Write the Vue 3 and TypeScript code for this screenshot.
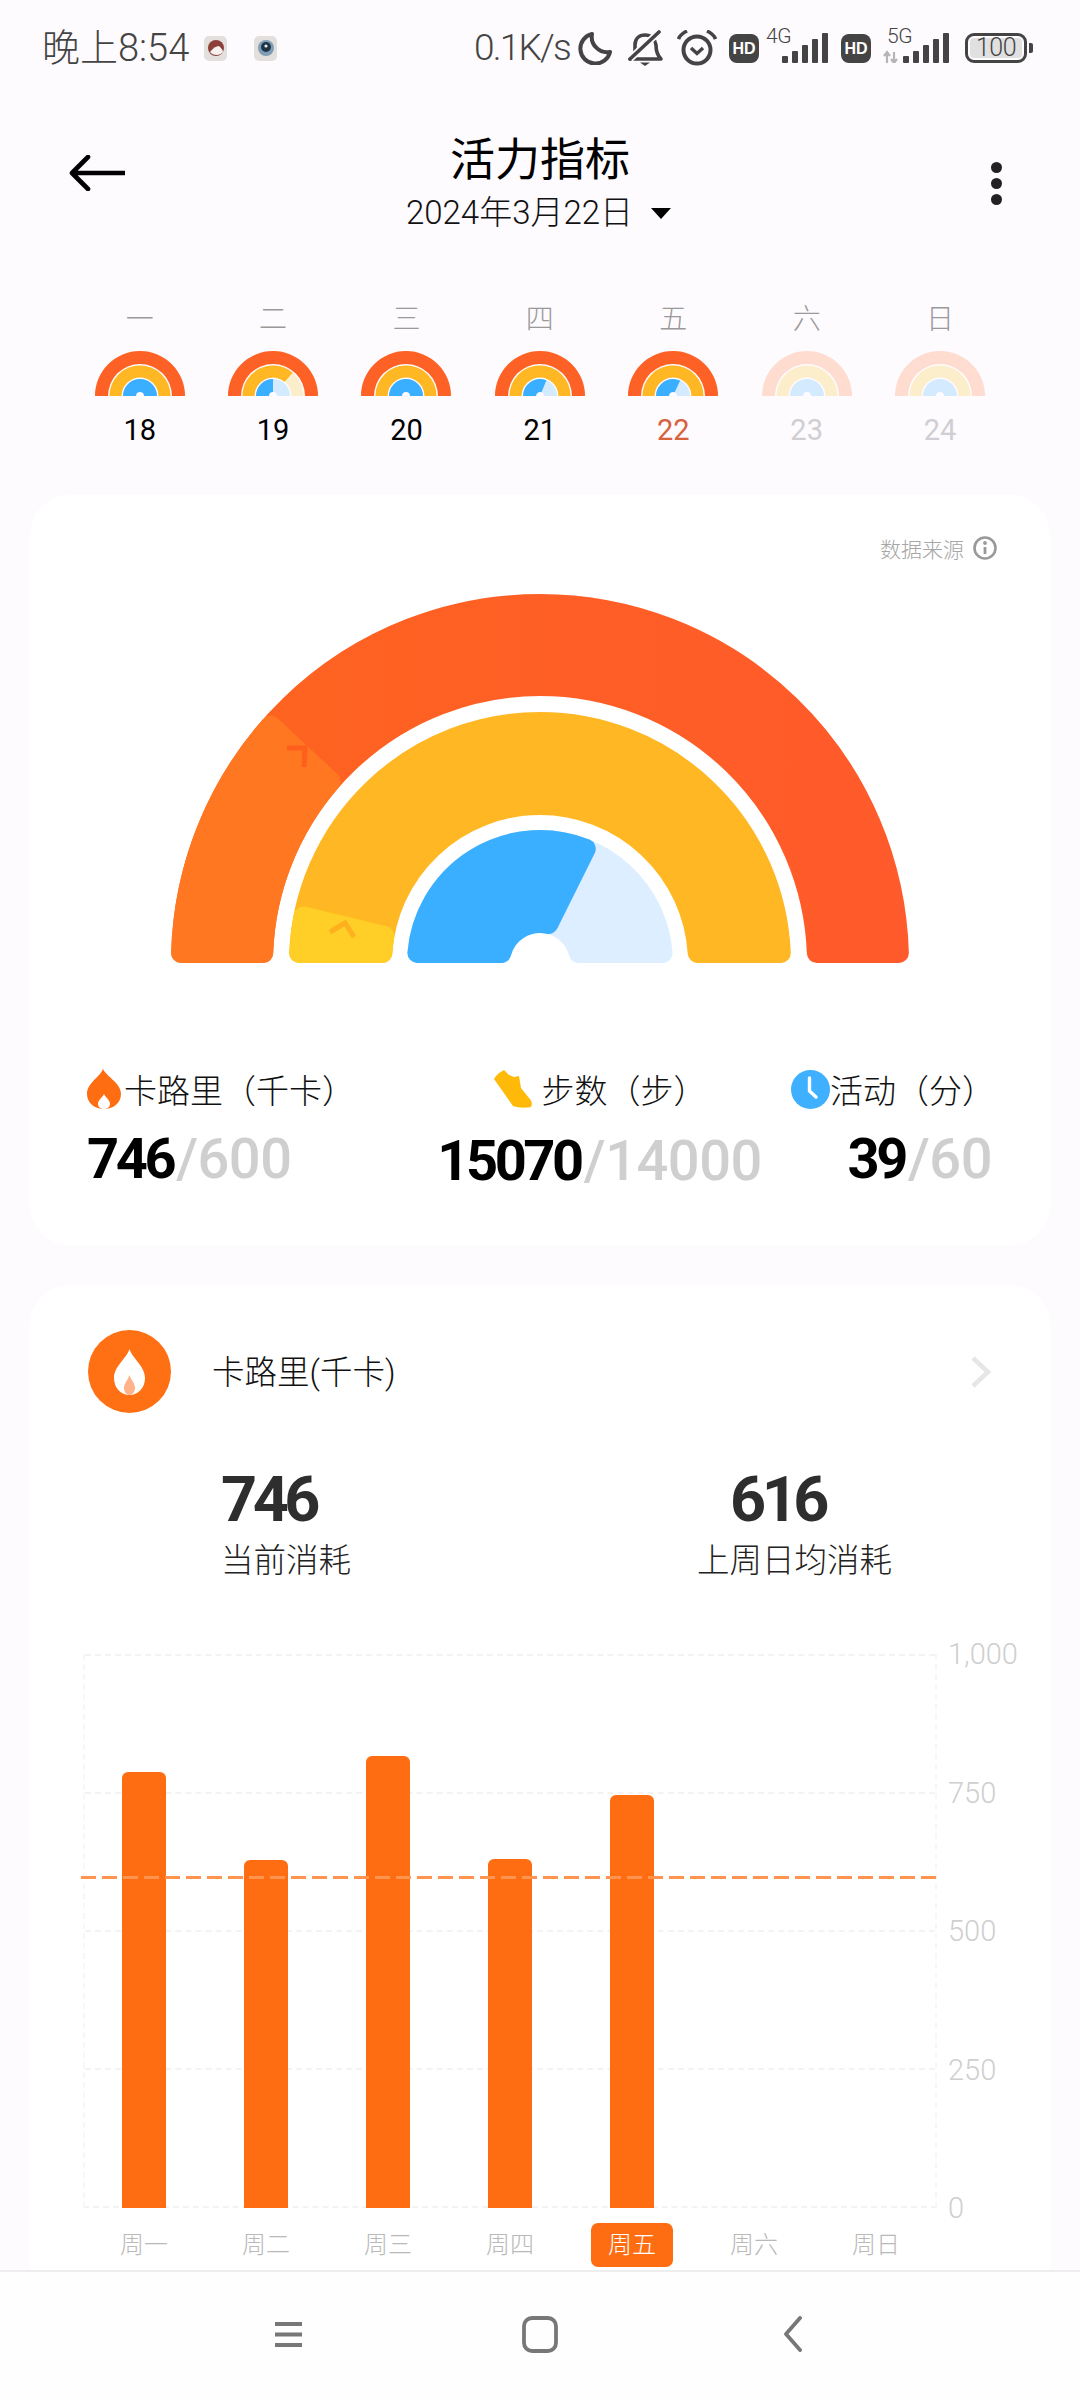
<script setup lang="ts">
// angles run from the left end (0) over the top to the right end (180)
const polar = (cx: number, cy: number, r: number, deg: number) => {
  const a = (deg * Math.PI) / 180
  return `${(cx - r * Math.cos(a)).toFixed(2)} ${(cy - r * Math.sin(a)).toFixed(2)}`
}

const sector = (cx: number, cy: number, inner: number, outer: number, from: number, to: number, inset = 0) => {
  const ro = outer - inset
  const ri = inner + inset
  const pad = (r: number) => (inset ? (inset / r) * (180 / Math.PI) : 0)
  return [
    `M ${polar(cx, cy, ro, from + pad(ro))}`,
    `A ${ro} ${ro} 0 ${to - from > 180 ? 1 : 0} 1 ${polar(cx, cy, ro, to - pad(ro))}`,
    `L ${polar(cx, cy, ri, to - pad(ri))}`,
    `A ${ri} ${ri} 0 ${to - from > 180 ? 1 : 0} 0 ${polar(cx, cy, ri, from + pad(ri))}`,
    'Z',
  ].join(' ')
}

const bigRings = [
  { d: sector(369, 369, 267, 369, 0, 180, 10), fill: 'url(#redFade)' },
  { d: sector(369, 369, 267, 369, 0, 43, 10), fill: '#ff7821' },
  { d: sector(369, 369, 148, 251, 0, 180, 10), fill: '#ffb823' },
  { d: sector(369, 369, 148, 251, 0, 13.5, 10), fill: '#ffcf27' },
  { d: sector(369, 369, 30, 133, 0, 180, 10), fill: '#dceeff' },
  { d: sector(369, 369, 30, 133, 0, 116.5, 10), fill: '#3aaeff' },
]

interface Day {
  week: string
  date: number
  red: number
  yellow: number
  blue: number
  state?: 'today' | 'future'
}

const days: Day[] = [
  { week: '一', date: 18, red: 180, yellow: 180, blue: 180 },
  { week: '二', date: 19, red: 180, yellow: 130, blue: 90 },
  { week: '三', date: 20, red: 180, yellow: 180, blue: 180 },
  { week: '四', date: 21, red: 180, yellow: 180, blue: 112 },
  { week: '五', date: 22, red: 180, yellow: 180, blue: 115, state: 'today' },
  { week: '六', date: 23, red: 0, yellow: 0, blue: 0, state: 'future' },
  { week: '日', date: 24, red: 0, yellow: 0, blue: 0, state: 'future' },
]

const miniRings = (d: Day) => [
  { d: sector(45, 45, 32, 45, 0, 180), fill: '#fedccf' },
  { d: sector(45, 45, 32, 45, 0, Math.max(d.red, 0.01)), fill: d.red ? '#fe6125' : 'none' },
  { d: sector(45, 45, 18.5, 30.5, 0, 180), fill: '#fdeecb' },
  { d: sector(45, 45, 18.5, 30.5, 0, Math.max(d.yellow, 0.01)), fill: d.yellow ? '#ffb823' : 'none' },
  { d: sector(45, 45, 4, 17, 0, 180), fill: '#d3eaff' },
  { d: sector(45, 45, 4, 17, 0, Math.max(d.blue, 0.01)), fill: d.blue ? '#3aaeff' : 'none' },
]

const weekBars = [
  { label: '周一', value: 787 },
  { label: '周二', value: 628 },
  { label: '周三', value: 816 },
  { label: '周四', value: 630 },
  { label: '周五', value: 746, active: true },
  { label: '周六', value: 0 },
  { label: '周日', value: 0 },
]

const axis = ['1,000', '750', '500', '250', '0']
const signal = [7, 12, 18, 24, 30]
</script>

<template>
  <div class="screen">
    <div class="main">
      <div class="status">
        <span class="clock">晚上8:54</span>
        <span class="note note-a">
          <svg width="18" height="18" viewBox="0 0 18 18">
            <circle cx="9" cy="9" r="8" fill="#8c3f38" />
            <path d="M3 13 C6 9 9 7 12 7 C14 9 16 11 16 13 C13 17 6 17 3 13 Z" fill="#f4f1ee" />
          </svg>
        </span>
        <span class="note note-b">
          <svg width="18" height="18" viewBox="0 0 18 18">
            <circle cx="9" cy="9" r="8" fill="#7f9db4" />
            <circle cx="9" cy="8" r="5" fill="#1f3445" />
            <circle cx="9" cy="7" r="1.6" fill="#e6eef4" />
          </svg>
        </span>
        <span class="speed">0.1K/s</span>
        <svg class="ic moon" width="36" height="34" viewBox="0 0 36 34">
          <path d="M15 3 A15 15 0 1 0 33 21 A15.5 15.5 0 0 1 15 3 Z" fill="none" stroke="#444" stroke-width="4" stroke-linejoin="round" />
        </svg>
        <svg class="ic bell" width="35" height="36" viewBox="0 0 35 36">
          <path d="M2 29 H33 C29 25 28 21 28 15 C27 9 23 5 17 5 C11 5 7 9 7 15 V22" fill="none" stroke="#444" stroke-width="3.6" stroke-linejoin="round" stroke-linecap="round" />
          <path d="M12 32.5 H22 L17 36 Z" fill="#444" />
          <path d="M31 2 L2 29" stroke="#fefbfe" stroke-width="7" />
          <path d="M31 2 L2 29" stroke="#444" stroke-width="3.6" stroke-linecap="round" />
        </svg>
        <svg class="ic alarm" width="40" height="36" viewBox="0 0 40 36">
          <circle cx="20" cy="20" r="13.5" fill="none" stroke="#444" stroke-width="4" />
          <path d="M14 18 L20 23.5 L26 18" fill="none" stroke="#444" stroke-width="3.4" />
          <path d="M1.5 9 C3 5 6 3 10 1 M38.5 9 C37 5 34 3 30 1" fill="none" stroke="#444" stroke-width="3.6" />
        </svg>
        <span class="hd">HD</span>
        <span class="net">
          <span class="net-tag">4G</span>
          <svg width="46" height="30" viewBox="0 0 46 30" class="net-bars">
            <rect v-for="(h, i) in signal" :key="i" :x="i * 10" :y="30 - h" width="6" :height="h" rx="1" fill="#444" />
          </svg>
        </span>
        <span class="hd hd-second">HD</span>
        <span class="net net-five">
          <span class="net-tag">5G</span>
          <svg width="66" height="30" viewBox="0 0 66 30" class="net-bars">
            <path d="M4 20 V30 M1 23 L4 19 L7 23 M11 19 V29 M8 26 L11 30 L14 26" fill="none" stroke="#b5b5b5" stroke-width="2.2" />
            <rect v-for="(h, i) in signal" :key="i" :x="20 + i * 10" :y="30 - h" width="6" :height="h" rx="1" fill="#444" />
          </svg>
        </span>
        <span class="battery"><span class="battery-fill">100</span></span>
        <i class="battery-cap"></i>
      </div>

      <div class="header">
        <svg class="back" width="56" height="36" viewBox="0 0 56 36">
          <path d="M55 18 H4 M19 2 L3 18 L19 34" fill="none" stroke="#000" stroke-width="4.6" stroke-linecap="round" stroke-linejoin="round" />
        </svg>
        <div class="heading">
          <div class="title">活力指标</div>
          <div class="date">2024年3月22日<i class="caret"></i></div>
        </div>
        <div class="more"><i></i><i></i><i></i></div>
      </div>

      <div class="week">
        <div v-for="d in days" :key="d.date" class="day" :class="d.state">
          <span class="day-name">{{ d.week }}</span>
          <svg width="90" height="45" viewBox="0 0 90 45" class="mini">
            <path v-for="(r, i) in miniRings(d)" :key="i" :d="r.d" :fill="r.fill" />
          </svg>
          <span class="day-num">{{ d.date }}</span>
        </div>
      </div>

      <section class="card rings-card">
        <div class="source">
          <span>数据来源</span>
          <svg width="26" height="26" viewBox="0 0 26 26">
            <circle cx="13" cy="13" r="10.5" fill="none" stroke="#999" stroke-width="2.6" />
            <circle cx="13" cy="8" r="1.9" fill="#999" />
            <path d="M13 12 V19" stroke="#999" stroke-width="2.8" />
          </svg>
        </div>

        <svg class="rainbow" width="738" height="369" viewBox="0 0 738 369">
          <defs>
            <linearGradient id="redFade" x1="0" x2="1" y1="0" y2="0">
              <stop offset="0" stop-color="#fe641f" />
              <stop offset="1" stop-color="#ff5a2b" />
            </linearGradient>
          </defs>
          <path v-for="(r, i) in bigRings" :key="i" :d="r.d" :fill="r.fill" :stroke="r.fill" stroke-width="20" stroke-linejoin="round" />
          <path d="M116 154 H134 L133 173" fill="none" stroke="#ff5e1d" stroke-width="5" />
          <path d="M159 338 L174 329 L183 343" fill="none" stroke="#ffb01f" stroke-width="5" />
        </svg>

        <div class="stats">
          <div class="stat stat-left">
            <div class="stat-label">
              <svg width="34" height="40" viewBox="0 0 34 40">
                <path d="M16 0 C20 8 34 14 34 25 C34 34 26 40 17 40 C8 40 0 34 0 25 C0 14 12 9 16 0 Z" fill="#ff6d13" />
                <path d="M17 25 C19 29 23 31 23 35 C23 38 20 40 17 40 C14 40 11 38 11 35 C11 31 15 29 17 25 Z" fill="#fff" />
              </svg>
              <span>卡路里（千卡）</span>
            </div>
            <div class="stat-value"><b>746</b><span>/600</span></div>
          </div>
          <div class="stat stat-mid">
            <div class="stat-label">
              <svg width="40" height="40" viewBox="0 0 40 40">
                <path d="M11 1 C7 3 3 6 1 10 L20 37 C25 39 33 39 38 38 C40 34 38 31 36 29 L28 19 L26 7 L21 8 L16 6 Z" fill="#ffb908" />
              </svg>
              <span>步数（步）</span>
            </div>
            <div class="stat-value"><b>15070</b><span>/14000</span></div>
          </div>
          <div class="stat stat-right">
            <div class="stat-label">
              <svg width="39" height="39" viewBox="0 0 39 39">
                <circle cx="19.5" cy="19.5" r="19.5" fill="#3fb0ff" />
                <path d="M18.5 8 V21 L25 27" fill="none" stroke="#fff" stroke-width="3.4" stroke-linecap="round" stroke-linejoin="round" />
              </svg>
              <span>活动（分）</span>
            </div>
            <div class="stat-value"><b>39</b><span>/60</span></div>
          </div>
        </div>
      </section>

      <section class="card chart-card">
        <div class="chart-head">
          <svg width="83" height="83" viewBox="0 0 83 83">
            <circle cx="41.5" cy="41.5" r="41.5" fill="#ff7014" />
            <path d="M41.5 19 C44 28 57 36 57 48 C57 58 50 65 41.5 65 C33 65 26 58 26 48 C26 36 39 28 41.5 19 Z" fill="#fff" />
            <path d="M41.5 45 C43 50 47 53 47 58 C47 62 44.5 65 41.5 65 C38.5 65 36 62 36 58 C36 53 40 50 41.5 45 Z" fill="#ffb38a" />
          </svg>
          <span class="chart-title">卡路里(千卡)</span>
          <svg class="chevron" width="22" height="32" viewBox="0 0 22 32">
            <path d="M3 2 L18 16 L3 30" fill="none" stroke="#e6e6e6" stroke-width="4.5" />
          </svg>
        </div>

        <div class="summary">
          <div class="sum-item">
            <b>746</b>
            <span>当前消耗</span>
          </div>
          <div class="sum-item sum-last">
            <b>616</b>
            <span>上周日均消耗</span>
          </div>
        </div>

        <div class="chart">
          <div class="plot">
            <div class="grid-lines"><i></i><i></i><i></i><i></i></div>
            <div class="bars">
              <div v-for="b in weekBars" :key="b.label" class="bar-slot">
                <div v-if="b.value" class="bar" :style="{ height: b.value / 10 + '%' }"></div>
              </div>
            </div>
            <div class="target"></div>
          </div>
          <div class="axis">
            <span v-for="a in axis" :key="a">{{ a }}</span>
          </div>
        </div>
        <div class="labels">
          <span v-for="b in weekBars" :key="b.label" class="label" :class="{ active: b.active }">{{ b.label }}</span>
        </div>
      </section>
    </div>

    <nav class="nav">
      <svg width="27" height="25" viewBox="0 0 27 25">
        <path d="M0 2 H27 M0 12.5 H27 M0 23 H27" stroke="#777" stroke-width="3.8" />
      </svg>
      <svg class="nav-home" width="36" height="37" viewBox="0 0 36 37">
        <rect x="2" y="2" width="32" height="33" rx="8" fill="none" stroke="#777" stroke-width="3.8" />
      </svg>
      <svg class="nav-back" width="19" height="36" viewBox="0 0 19 36">
        <path d="M17 2 L3 18 L17 34" fill="none" stroke="#777" stroke-width="3.8" stroke-linecap="round" stroke-linejoin="round" />
      </svg>
    </nav>
  </div>
</template>

<style scoped>
.screen {
  width: 1080px;
  height: 2400px;
  display: flex;
  flex-direction: column;
  overflow: hidden;
  background: #fefbfe;
  font-family: Roboto, "Noto Sans CJK SC", sans-serif;
  font-weight: 300;
  color: #111;
}

.main {
  flex: 1;
  min-height: 0;
  overflow: hidden;
}

.status {
  height: 96px;
  padding-left: 42px;
  display: flex;
  align-items: center;
  color: #444;
  box-sizing: border-box;
}

.clock,
.speed {
  line-height: 40px;
  white-space: nowrap;
}

.clock {
  width: 162px;
  font-size: 38px;
}

.note {
  flex: none;
  width: 23px;
  height: 25px;
  border-radius: 5px;
  background: #e3dfdc;
  display: flex;
  align-items: center;
  justify-content: center;
}

.note-b {
  margin-left: 27px;
}

.speed {
  margin-left: 197px;
  width: 103px;
  font-size: 37px;
  letter-spacing: -1.8px;
}

.ic {
  flex: none;
}

.bell {
  margin-left: 15px;
}

.alarm {
  margin-left: 14px;
}

.hd {
  flex: none;
  width: 30px;
  height: 29px;
  margin-left: 12px;
  border-radius: 8px;
  background: #444;
  color: #fff;
  font-size: 16px;
  font-weight: 700;
  line-height: 29px;
  text-align: center;
  font-family: "Liberation Sans", sans-serif;
}

.hd-second {
  margin-left: 13px;
}

.net {
  flex: none;
  width: 62px;
  height: 34px;
  position: relative;
  margin: -4px 0 0 7px;
}

.net-five {
  width: 66px;
  margin-left: 12px;
}

.net-tag {
  position: absolute;
  left: 0;
  top: -2px;
  font-size: 21px;
  line-height: 18px;
  letter-spacing: -0.5px;
}

.net-five .net-tag {
  left: 4px;
}

.net-bars {
  position: absolute;
  right: 0;
  bottom: 0;
}

.battery {
  flex: none;
  width: 62px;
  height: 30px;
  margin-left: 16px;
  box-sizing: border-box;
  border: 3.5px solid #444;
  border-radius: 9px;
  padding: 2px;
  display: flex;
}

.battery-fill {
  flex: 1;
  background: #e0e0e0;
  border-radius: 4px;
  font-size: 25px;
  line-height: 19px;
  letter-spacing: -0.5px;
  text-align: center;
  color: #444;
}

.battery-cap {
  flex: none;
  width: 4px;
  height: 10px;
  margin-left: 2px;
  border-radius: 0 2px 2px 0;
  background: #444;
}

.header {
  display: grid;
  grid-template-columns: 1fr auto 1fr;
  padding: 38px 69px 0;
}

.back {
  margin-top: 21px;
}

.heading {
  text-align: center;
}

.title {
  font-size: 45px;
  line-height: 52px;
  font-weight: 400;
  color: #000;
  margin-top: 1px;
}

.date {
  margin: 6px 0 0 -3px;
  font-size: 33px;
  line-height: 40px;
  display: flex;
  align-items: center;
  justify-content: center;
  color: #111;
}

.caret {
  width: 0;
  height: 0;
  margin-left: 18px;
  border-left: 10px solid transparent;
  border-right: 10px solid transparent;
  border-top: 11px solid #000;
}

.more {
  justify-self: end;
  display: flex;
  flex-direction: column;
  gap: 5px;
  padding-top: 28px;
  margin-right: 9px;
}

.more i {
  width: 11px;
  height: 11px;
  border-radius: 50%;
  background: #222;
}

.week {
  display: grid;
  grid-template-columns: repeat(7, 133.4px);
  padding-left: 73px;
  margin-top: 67px;
}

.day {
  display: flex;
  flex-direction: column;
  align-items: center;
}

.day-name {
  font-size: 28px;
  line-height: 40px;
  color: #999;
}

.mini {
  display: block;
  margin-top: 11px;
}

.day-num {
  margin-top: 14px;
  font-size: 29px;
  line-height: 40px;
  font-weight: 400;
  color: #000;
}

.today .day-num {
  color: #d8623c;
}

.future .day-num {
  color: #cfcfd3;
}

.card {
  margin: 0 30px;
  background: #fff;
  border-radius: 40px;
}

.rings-card {
  margin-top: 45px;
  height: 750px;
  padding-top: 40px;
  box-sizing: border-box;
}

.source {
  display: flex;
  justify-content: flex-end;
  align-items: center;
  gap: 8px;
  padding-right: 52px;
  height: 26px;
  font-size: 21px;
  color: #a6a6a6;
}

.rainbow {
  display: block;
  margin: 33px auto 0;
}

.stats {
  display: flex;
  justify-content: space-between;
  margin-top: 106px;
  padding: 0 58px 0 57px;
}

.stat {
  display: flex;
  flex-direction: column;
}

.stat-mid {
  align-items: center;
  margin-left: 53px;
}

.stat-right {
  align-items: flex-end;
}

.stat-label {
  display: flex;
  align-items: center;
  height: 40px;
  font-size: 33px;
  color: #111;
  white-space: nowrap;
}

.stat-left .stat-label span {
  margin-left: 3px;
}

.stat-mid .stat-label span {
  margin-left: 9px;
}

.stat-right .stat-label {
  margin-right: -3px;
}

.stat-value {
  margin-top: 20px;
  font-size: 56px;
  line-height: 60px;
  font-family: Roboto, sans-serif;
  white-space: nowrap;
}

.stat-mid .stat-value {
  margin-top: 22px;
}

.stat-value b {
  font-weight: 700;
  letter-spacing: -3.4px;
  color: #000;
}

.stat-value span {
  margin-left: 3px;
  font-weight: 500;
  letter-spacing: -0.5px;
  color: #cfcfcf;
}

.chart-card {
  margin-top: 40px;
  border-radius: 40px 40px 0 0;
  padding-top: 45px;
  height: 1000px;
}

.chart-head {
  display: flex;
  align-items: center;
  padding: 0 58px;
}

.chart-title {
  margin: 0 0 5px 41px;
  font-size: 32.5px;
  flex: 1;
}

.summary {
  display: grid;
  grid-template-columns: 476px auto;
  padding-left: 191px;
  margin-top: 52px;
}

.sum-item {
  display: flex;
  flex-direction: column;
  align-items: flex-start;
}

.sum-item b {
  font-size: 63px;
  line-height: 70px;
  font-weight: 700;
  letter-spacing: -4.5px;
  color: #2e2e2e;
  font-family: Roboto, sans-serif;
}

.sum-item span {
  margin-top: 4px;
  font-size: 32.5px;
  line-height: 44px;
  color: #222;
}

.sum-last b {
  margin-left: 33px;
}

.chart {
  display: flex;
  margin: 71px 0 0 53px;
}

.plot {
  width: 854px;
  height: 554px;
  position: relative;
  display: grid;
}

.plot > .grid-lines,
.plot > .bars {
  grid-area: 1 / 1;
}

.grid-lines {
  display: flex;
  flex-direction: column;
  border-bottom: 2px dashed #f3f3f3;
  border-left: 2px dashed #f7f7f7;
  border-right: 2px dashed #f7f7f7;
}

.grid-lines i {
  flex: 1;
  border-top: 2px dashed #f3f3f3;
}

.bars {
  display: grid;
  grid-template-columns: repeat(7, 122px);
  align-items: end;
  height: 554px;
}

.bar-slot {
  height: 100%;
  display: flex;
  align-items: flex-end;
  justify-content: center;
}

.bar {
  width: 44px;
  background: #ff6d13;
  border-radius: 6px 6px 0 0;
}

.target {
  position: absolute;
  left: -2px;
  right: -2px;
  top: 40%;
  height: 3px;
  background: repeating-linear-gradient(90deg, #ff9350 0 15px, transparent 15px 21px);
}

.axis {
  margin-left: 11px;
  height: 554px;
  display: flex;
  flex-direction: column;
  justify-content: space-between;
}

.axis span {
  height: 0;
  line-height: 0;
  font-size: 29px;
  color: #cfcfcf;
}

.labels {
  display: grid;
  grid-template-columns: repeat(7, 122px);
  margin: 15px 0 0 53px;
  justify-items: center;
}

.label {
  width: 82px;
  height: 44px;
  line-height: 44px;
  border-radius: 7px;
  text-align: center;
  font-size: 24px;
  color: #b9b9b9;
}

.label.active {
  background: #ff6d13;
  color: #fff;
}

.nav {
  height: 130px;
  flex: none;
  box-sizing: border-box;
  border-top: 2px solid #eee;
  background: #fefefe;
  display: flex;
  align-items: center;
  padding: 0 0 4px 275px;
}

.nav-home {
  margin-left: 220px;
}

.nav-back {
  margin-left: 225px;
}
</style>

<style>
html,
body {
  margin: 0;
  background: #fefbfe;
}
</style>
